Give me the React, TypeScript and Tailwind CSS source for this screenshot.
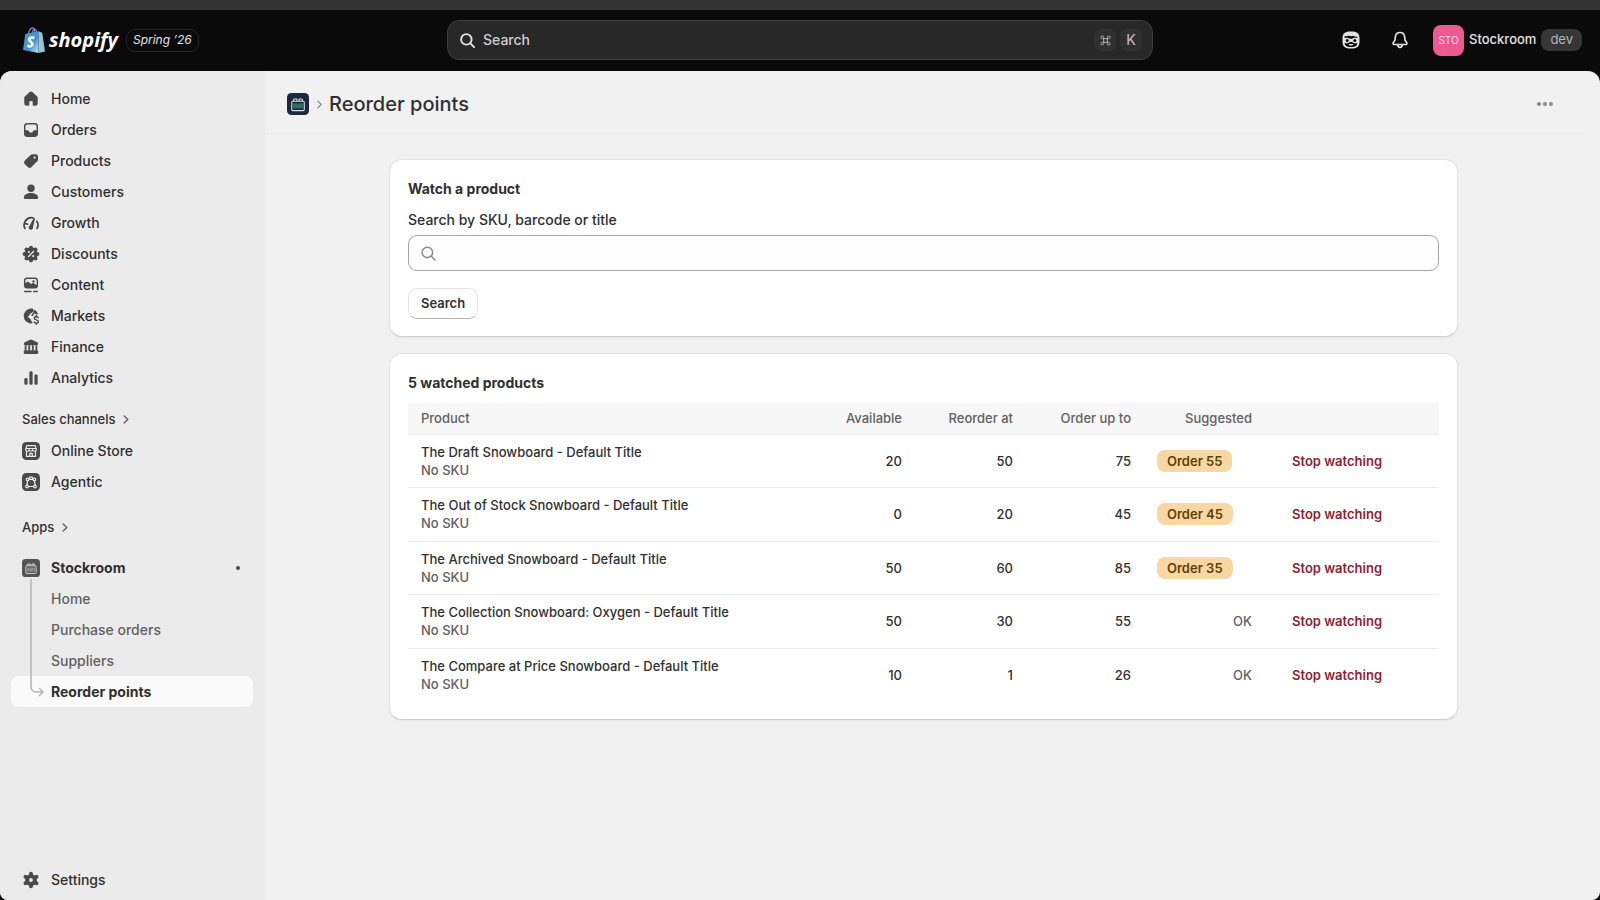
import type { ReactNode } from 'react'

type NavItem = { label: string; icon: ReactNode }

type Product = {
  title: string
  available: number
  reorderAt: number
  orderUpTo: number
  suggested: number
}

const products: Product[] = [
  { title: 'The Draft Snowboard - Default Title', available: 20, reorderAt: 50, orderUpTo: 75, suggested: 55 },
  { title: 'The Out of Stock Snowboard - Default Title', available: 0, reorderAt: 20, orderUpTo: 45, suggested: 45 },
  { title: 'The Archived Snowboard - Default Title', available: 50, reorderAt: 60, orderUpTo: 85, suggested: 35 },
  { title: 'The Collection Snowboard: Oxygen - Default Title', available: 50, reorderAt: 30, orderUpTo: 55, suggested: 0 },
  { title: 'The Compare at Price Snowboard - Default Title', available: 10, reorderAt: 1, orderUpTo: 26, suggested: 0 },
]

function Icon({ children }: { children: ReactNode }) {
  return (
    <svg viewBox="0 0 20 20" className="size-[18px] shrink-0 fill-[#4a4a4a]" aria-hidden="true">
      {children}
    </svg>
  )
}

const HomeIcon = (
  <Icon>
    <path d="M8.200 2.600a2.700 2.700 0 0 1 3.600 0l4.800 4.300c.6.500.9 1.300.9 2v5.600a3 3 0 0 1-3 3h-1.700a.9.9 0 0 1-.9-.9v-3a1.400 1.400 0 0 0-1.400-1.400h-1a1.400 1.400 0 0 0-1.400 1.400v3a.9.9 0 0 1-.9.9H5.500a3 3 0 0 1-3-3V8.900c0-.8.3-1.500.9-2z" />
  </Icon>
)

const OrdersIcon = (
  <Icon>
    <path
      fillRule="evenodd"
      d="M6 2.200h8a3.800 3.800 0 0 1 3.800 3.800v8a3.800 3.800 0 0 1-3.800 3.800H6A3.800 3.800 0 0 1 2.200 14V6A3.800 3.800 0 0 1 6 2.200zm0 1.600A2.200 2.200 0 0 0 3.800 6v4.400h2.500c.6 0 1.100.3 1.300.8l.3.700c.2.500.7.800 1.200.8h1.800c.5 0 1-.3 1.200-.8l.3-.7c.2-.5.7-.8 1.300-.8h2.500V6A2.200 2.200 0 0 0 14 3.800z"
    />
  </Icon>
)

const ProductsIcon = (
  <Icon>
    <path
      fillRule="evenodd"
      d="M9.600 3.300a3 3 0 0 1 2.100-.9h3.500a2.600 2.600 0 0 1 2.600 2.600v3.300a3 3 0 0 1-.9 2.100l-6.300 6.400a3 3 0 0 1-4.200 0l-3.200-3.200a3 3 0 0 1 0-4.200zM14 7.400a1.200 1.200 0 1 0 0-2.400 1.200 1.200 0 0 0 0 2.400z"
    />
  </Icon>
)

const CustomersIcon = (
  <Icon>
    <circle cx="10" cy="5.8" r="4.1" />
    <path d="M2 16.200c.3-3.100 3.700-5 8-5s7.700 1.900 8 5c.1 1-.6 1.700-1.600 1.700H3.600c-1 0-1.700-.7-1.600-1.700z" />
  </Icon>
)

const GrowthIcon = (
  <Icon>
    <path
      d="M3.200 16a8.200 8.200 0 0 1 9-11.700M16.600 8.200a8.200 8.200 0 0 1 .2 7.800M6 11.300l-2.300-.7"
      className="fill-none stroke-[#4a4a4a] stroke-2"
      strokeLinecap="round"
    />
    <path d="M13.800 4.400c.5.100.8.600.6 1.100l-2.100 8.800a2.500 2.500 0 1 1-3.700-1.500l4.200-8c.2-.4.600-.5 1-.4z" />
  </Icon>
)

const lobes = [
  [10, 2.8],
  [15.1, 4.9],
  [17.2, 10],
  [15.1, 15.1],
  [10, 17.2],
  [4.9, 15.1],
  [2.8, 10],
  [4.9, 4.9],
]

const DiscountsIcon = (
  <Icon>
    <circle cx="10" cy="10" r="7.4" />
    {lobes.map(([x, y]) => (
      <circle key={`${x}-${y}`} cx={x} cy={y} r="2.1" />
    ))}
    <path d="M7.300 12.700l5.400-5.400" className="stroke-[#ebebeb] stroke-[1.5]" strokeLinecap="round" />
    <circle cx="7.6" cy="7.8" r="1.2" className="fill-[#ebebeb]" />
    <circle cx="12.4" cy="12.2" r="1.2" className="fill-[#ebebeb]" />
  </Icon>
)

const ContentIcon = (
  <Icon>
    <path
      fillRule="evenodd"
      d="M5.500 1.800h9a3.300 3.300 0 0 1 3.300 3.300v5.400a3.300 3.300 0 0 1-3.300 3.300h-9a3.300 3.300 0 0 1-3.300-3.300V5.100a3.300 3.300 0 0 1 3.300-3.300zm0 1.500c-1 0-1.800.8-1.800 1.800v3l1.700-1.400a1.600 1.600 0 0 1 2.100 0l1.800 1.700c.4.400 1 .4 1.400.1l.6-.4c.5-.4 1.200-.4 1.700 0l3.300 2V5.100c0-1-.8-1.800-1.800-1.800z"
    />
    <circle cx="12.8" cy="5.9" r="1.3" />
    <path d="M3 17.300h7M13 17.300h4" className="stroke-[#4a4a4a] stroke-[1.6]" strokeLinecap="round" />
  </Icon>
)

const MarketsIcon = (
  <Icon>
    <path d="M10 1.800a8.200 8.200 0 1 0 1.400 16.300c.4-.1.500-.5.300-.9-.6-1.100-1.900-1.500-1.900-3.200 0-1.400-1.600-1.100-2.500-2.100-.8-.9-.3-2 .6-2.500 1.100-.7.900-2 2.200-2.600 1.100-.5 2.300-1 2.600-2.600.1-.7.1-1.600-.2-2.100-.6-.2-1.500-.3-2.500-.3z" />
    <path d="M14.200 3.300c1.600.9 2.800 2.400 3.400 4.100.2.500-.2.900-.7.800l-2.600-.6c-.9-.2-1.500.4-1.500 1.200 0 .9-.6 1.400-1.300 1.300-1-.1-1.400-1.300-.8-2.100.5-.6 1.300-.6 1.700-1.300.4-.8.200-2.100.6-3 .2-.4.700-.6 1.200-.4z" />
    <path
      d="M18 11.800c-.4-.7-1.200-1-2.100-1-1.300 0-2.200.7-2.200 1.700 0 2.400 4.500 1.100 4.500 3.600 0 1.100-1 1.800-2.300 1.800-1.100 0-1.900-.4-2.400-1.200M15.900 9.500v1.300M15.900 17.900v1.300"
      className="fill-none stroke-[#4a4a4a] stroke-[1.6]"
      strokeLinecap="round"
    />
  </Icon>
)

const FinanceIcon = (
  <Icon>
    <path d="M9 1.900a2.200 2.200 0 0 1 2 0l5.900 2.900c.6.300.9.800.9 1.400v.6c0 .7-.5 1.200-1.200 1.200H3.400c-.7 0-1.200-.5-1.200-1.200v-.6c0-.6.300-1.100.9-1.400z" />
    <path d="M4 8v6M8 8v6M12 8v6M16 8v6" className="stroke-[#4a4a4a] stroke-2" />
    <rect x="2" y="13.5" width="16" height="4.3" rx="1.5" />
  </Icon>
)

const AnalyticsIcon = (
  <Icon>
    <rect x="2.6" y="10" width="3.6" height="7.5" rx="1.5" />
    <rect x="8.2" y="2.5" width="3.6" height="15" rx="1.5" />
    <rect x="13.8" y="6" width="3.6" height="11.5" rx="1.5" />
  </Icon>
)

const SettingsIcon = (
  <Icon>
    <circle cx="10" cy="10" r="6.5" />
    <path
      d="M10 3v14M3.900 6.500l12.200 7M16.100 6.500l-12.200 7"
      className="stroke-[#4a4a4a] stroke-[4.4]"
      strokeLinecap="round"
    />
    <circle cx="10" cy="10" r="2.1" className="fill-[#ebebeb]" />
  </Icon>
)

const OnlineStoreIcon = (
  <Icon>
    <rect width="20" height="20" rx="5" />
    <g className="fill-none stroke-[#ebebeb] stroke-[1.3]" strokeLinejoin="round">
      <path d="M5.300 4h9.400l1.300 4.300a1.900 1.900 0 0 1-4 0 1.900 1.900 0 0 1-4 0 1.900 1.900 0 0 1-4 0zM4.300 7.200h11.400M5 10.400V16h10v-5.600M8.600 16v-3.300h2.800V16" />
    </g>
  </Icon>
)

const AgenticIcon = (
  <Icon>
    <rect width="20" height="20" rx="5" />
    <g className="fill-none stroke-[#ebebeb] stroke-[1.3]">
      <path d="M7.600 7h4.800M13.800 8.800l.8 4.900M12.800 15H7.200M6.200 8.800l-.8 4.900M8.200 6.600l.4-2h2.800l.4 2" />
      <circle cx="6.2" cy="7.2" r="1.5" />
      <circle cx="13.8" cy="7.2" r="1.5" />
      <circle cx="5.6" cy="15" r="1.5" />
      <circle cx="14.4" cy="15" r="1.5" />
    </g>
  </Icon>
)

function CrateShape() {
  return (
    <g className="fill-none stroke-[#dcdcdc]" strokeLinejoin="round">
      <path d="M5.800 7.500L6.300 5.500h2.700v2M11 7.500v-2h2.700l.5 2" />
      <rect x="4.3" y="7.5" width="11.4" height="8.5" rx="1" />
    </g>
  )
}

const StockroomIcon = (
  <Icon>
    <rect width="20" height="20" rx="4" className="fill-[#555]" />
    <rect x="5.5" y="9.5" width="9" height="4.5" className="fill-[#8a8a8a]" />
    <CrateShape />
  </Icon>
)

const mainNav: NavItem[] = [
  { label: 'Home', icon: HomeIcon },
  { label: 'Orders', icon: OrdersIcon },
  { label: 'Products', icon: ProductsIcon },
  { label: 'Customers', icon: CustomersIcon },
  { label: 'Growth', icon: GrowthIcon },
  { label: 'Discounts', icon: DiscountsIcon },
  { label: 'Content', icon: ContentIcon },
  { label: 'Markets', icon: MarketsIcon },
  { label: 'Finance', icon: FinanceIcon },
  { label: 'Analytics', icon: AnalyticsIcon },
]

const channels: NavItem[] = [
  { label: 'Online Store', icon: OnlineStoreIcon },
  { label: 'Agentic', icon: AgenticIcon },
]

const appPages = ['Home', 'Purchase orders', 'Suppliers', 'Reorder points']

function NavLink({ label, icon }: NavItem) {
  return (
    <a href="#" className="flex h-[31px] items-center gap-[11px] rounded-lg px-[11px] text-sm font-[550] text-[#303030]">
      {icon}
      {label}
    </a>
  )
}

function SectionButton({ label }: { label: string }) {
  return (
    <button type="button" className="flex h-[31px] items-center gap-2 px-[11px] text-[13px] font-[550] text-[#303030]">
      {label}
      <svg viewBox="0 0 6 10" className="h-[9px] w-[6px] fill-none stroke-[#616161] stroke-[1.5]" aria-hidden="true">
        <path d="M1 1l4 4-4 4" strokeLinecap="round" strokeLinejoin="round" />
      </svg>
    </button>
  )
}

function SearchGlyph({ className }: { className: string }) {
  return (
    <svg viewBox="0 0 16 16" className={className} aria-hidden="true">
      <circle cx="6.8" cy="6.8" r="5.6" />
      <path d="M11 11l4 4" strokeLinecap="round" />
    </svg>
  )
}

function TopBar() {
  return (
    <header className="grid h-[61px] grid-cols-[1fr_minmax(0,706px)_1fr] items-center pb-px">
      <div className="flex items-center gap-2 pl-[23px]">
        <a href="#" className="flex items-center gap-1 text-white">
          <svg viewBox="0 0 22 26" className="h-[26px] w-[22px]" aria-hidden="true">
            <defs>
              <linearGradient id="bag" x1="0" y1="0" x2="1" y2="1">
                <stop offset="0" stopColor="#7f8fe0" />
                <stop offset=".3" stopColor="#3f9cc4" />
                <stop offset=".6" stopColor="#4d8ed6" />
                <stop offset="1" stopColor="#c3f0dc" />
              </linearGradient>
            </defs>
            <path
              d="M5.500 7c.3-3.500 2.200-6 4-6 1.500 0 2.300 1.800 2.300 5M9 6.500C9.500 3.600 11 2 12.300 2.300c1 .3 1.500 1.500 1.600 3"
              fill="none"
              stroke="#7b86cf"
              strokeWidth="1.3"
            />
            <path d="M2.300 7L15.500 4.300V26L0 23z" fill="url(#bag)" />
            <path d="M15.500 4.300l3.700 1.400L22 24.600 15.500 26z" fill="#8fc4dc" />
            <path
              d="M11.300 11c-1.200-.6-4.900-1-5 1.700-.1 2.200 3.300 2.200 3.200 4.500-.2 2.400-3.200 2.700-5.200 1.200"
              fill="none"
              stroke="#fff"
              strokeWidth="2.6"
            />
          </svg>
          <span className="font-['Open_Sans',sans-serif] text-xl leading-6 font-bold italic">shopify</span>
        </a>
        <span className="flex h-[23px] items-center rounded-[9px] border border-[#262626] px-[6px] text-xs text-[#e3e3e3] italic">
          Spring ’26
        </span>
      </div>

      <label className="flex h-10 items-center gap-2 rounded-xl border border-[#3d3d3d] bg-[#282828] px-[10px]">
        <SearchGlyph className="ml-[2px] size-[15px] fill-none stroke-[#e3e3e3] stroke-2" />
        <input
          type="search"
          aria-label="Search"
          placeholder="Search"
          className="min-w-0 flex-1 bg-transparent text-sm text-[#e3e3e3] outline-none placeholder:text-[#cfcfcf]"
        />
        <span className="flex gap-1 text-sm text-[#b5b5b5]">
          <kbd className="flex size-[22px] items-center justify-center rounded-md bg-[#303030] font-['Inter',sans-serif]">
            <svg viewBox="0 0 12 12" className="size-[11px] fill-none stroke-[#b5b5b5]" aria-hidden="true">
              <path d="M4 4V2.500A1.500 1.500 0 1 0 2.500 4h7A1.500 1.500 0 1 0 8 2.500v7A1.500 1.500 0 1 0 9.500 8h-7A1.500 1.500 0 1 0 4 9.500z" />
            </svg>
          </kbd>
          <kbd className="flex size-[22px] items-center justify-center rounded-md bg-[#303030] font-['Inter',sans-serif]">K</kbd>
        </span>
      </label>

      <div className="flex items-center justify-end gap-[17px] pr-[18px]">
        <button type="button" aria-label="Sidekick" className="flex size-8 items-center justify-center">
          <svg viewBox="0 0 18 18" className="size-[18px]" aria-hidden="true">
            <rect x=".5" y=".5" width="17" height="17" rx="6" className="fill-[#e3e3e3]" />
            <path d="M2.600 6.900V5.200c1.600.3 2.900 0 3.700-.8.400.8 1.200.9 2 .3.900.7 2 .7 2.700.1 1.200.9 2.600 1.100 4.400 1v1.100c-2.200-.4-4.200-.1-5.300.9H8C6.800 6.700 4.800 6.400 2.600 6.900z" className="fill-[#0a0a0a]" />
            <circle cx="5.2" cy="9.4" r="1.5" className="fill-[#0a0a0a]" />
            <circle cx="12.8" cy="9.4" r="1.5" className="fill-[#0a0a0a]" />
            <path d="M2.600 11.900c1.800.7 4 .5 5.300-.9h2.200c1.300 1.400 3.500 1.600 5.300.9-.3 2.600-1.700 4-6.400 4s-6.100-1.400-6.400-4z" className="fill-[#0a0a0a]" />
            <path d="M6.600 13h4.800c-.4 1.100-1.200 1.500-2.400 1.500S7 14.100 6.600 13z" className="fill-[#e3e3e3]" />
          </svg>
        </button>
        <button type="button" aria-label="Notifications" className="flex size-8 items-center justify-center">
          <svg viewBox="0 0 18 18" className="size-[18px] fill-none stroke-[#e3e3e3] stroke-[1.6]" aria-hidden="true">
            <path
              d="M9 1.500c-2.700 0-4.500 2-4.700 4.600l-.2 2.400c0 .5-.2.900-.5 1.300l-1.400 2c-.5.800 0 1.700.9 1.700h11.800c.9 0 1.400-.9.9-1.700l-1.400-2c-.3-.4-.5-.8-.5-1.300l-.2-2.400C13.500 3.500 11.700 1.500 9 1.500z"
              strokeLinejoin="round"
            />
            <path d="M6.600 13.700c.2 1.700 1 2.700 2.400 2.700s2.200-1 2.400-2.700" />
          </svg>
        </button>
        <button type="button" className="flex items-center gap-[5px] text-[13px] font-[550] text-[#e3e3e3]">
          <span className="flex size-[31px] items-center justify-center rounded-lg bg-[#ec5a91] text-[10px] font-normal text-[#fbdce8]">
            STO
          </span>
          Stockroom
          <span className="flex h-[22px] items-center rounded-lg bg-[#363636] px-[9px] text-[13px] font-normal text-[#b5b5b5]">
            dev
          </span>
        </button>
      </div>
    </header>
  )
}

function Sidebar() {
  return (
    <aside className="flex w-[265px] shrink-0 flex-col justify-between bg-[#ebebeb] pt-3 pr-3 pb-[5px] pl-[11px]">
      <nav>
        {mainNav.map((item) => (
          <NavLink key={item.label} {...item} />
        ))}

        <div className="mt-[11px]">
          <SectionButton label="Sales channels" />
          {channels.map((item) => (
            <NavLink key={item.label} {...item} />
          ))}
        </div>

        <div className="mt-[15px]">
          <SectionButton label="Apps" />
        </div>

        <div className="mt-[9px]">
          <a href="#" className="flex h-[31px] items-center gap-[11px] px-[11px] text-sm font-[650] text-[#303030]">
            {StockroomIcon}
            <span className="flex-1">Stockroom</span>
            <span className="mr-[2px] size-1 rounded-full bg-[#4a4a4a]" />
          </a>
          <ul className="relative text-sm text-[#616161]">
            {appPages.map((page) => (
              <li key={page}>
                <a
                  href="#"
                  className={
                    page === 'Reorder points'
                      ? 'flex h-[31px] items-center rounded-lg bg-[#fafafa] pl-10 font-[650] text-[#303030]'
                      : 'flex h-[31px] items-center rounded-lg pl-10'
                  }
                >
                  {page}
                </a>
              </li>
            ))}
            <svg
              viewBox="0 0 16 118"
              className="absolute -top-1 left-[18px] h-[118px] w-4 fill-none stroke-[#b5b5b5] stroke-[1.5]"
              aria-hidden="true"
            >
              <path d="M2 0v108a5 5 0 0 0 5 5h7M10.500 109.500l3.500 3.500-3.500 3.500" strokeLinecap="round" strokeLinejoin="round" />
            </svg>
          </ul>
        </div>
      </nav>

      <NavLink label="Settings" icon={SettingsIcon} />
    </aside>
  )
}

function WatchCard() {
  return (
    <section className="rounded-[13px] border border-[#e3e3e3] border-b-[#cfcfcf] bg-white p-[18px] pb-[17px] shadow-xs">
      <h2 className="text-sm leading-[22px] font-[650]">Watch a product</h2>
      <label htmlFor="product-search" className="mt-[9px] block text-sm leading-[22px]">
        Search by SKU, barcode or title
      </label>
      <div className="mt-1 flex h-9 items-center gap-2 rounded-[9px] border border-[#a5a5a5] bg-[#fdfdfd] px-3">
        <SearchGlyph className="size-[15px] fill-none stroke-[#8a8a8a] stroke-[1.6]" />
        <input id="product-search" type="text" className="min-w-0 flex-1 bg-transparent text-sm outline-none" />
      </div>
      <button
        type="button"
        className="mt-[17px] flex h-[31px] items-center rounded-[9px] border border-[#e3e3e3] border-b-[#b5b5b5] bg-white px-3 text-[13px] font-[600]"
      >
        Search
      </button>
    </section>
  )
}

function ProductsCard() {
  return (
    <section className="mt-4 rounded-[13px] border border-[#e3e3e3] border-b-[#cfcfcf] bg-white p-[18px] shadow-xs">
      <h2 className="text-sm leading-[22px] font-[650]">5 watched products</h2>
      <table className="mt-[9px] w-full table-fixed text-[13px] leading-[18px]">
        <colgroup>
          <col />
          <col className="w-[83px]" />
          <col className="w-[111px]" />
          <col className="w-[118px]" />
          <col className="w-[121px]" />
          <col className="w-[174px]" />
        </colgroup>
        <thead>
          <tr className="h-[31px] border-b border-[#ebebeb] bg-[#f7f7f7] text-right text-[#616161]">
            <th scope="col" className="px-[13px] text-left font-[550]">Product</th>
            <th scope="col" className="px-[13px] font-[550]">Available</th>
            <th scope="col" className="px-[13px] font-[550]">Reorder at</th>
            <th scope="col" className="px-[13px] font-[550]">Order up to</th>
            <th scope="col" className="px-[13px] font-[550]">Suggested</th>
            <td />
          </tr>
        </thead>
        <tbody>
          {products.map((p) => (
            <tr key={p.title} className="h-[53px] border-b border-[#ebebeb] text-right last:border-0 even:h-[54px]">
              <td className="px-[13px] text-left">
                <div>{p.title}</div>
                <div className="text-[#616161]">No SKU</div>
              </td>
              <td className="px-[13px]">{p.available}</td>
              <td className="px-[13px]">{p.reorderAt}</td>
              <td className="px-[13px]">{p.orderUpTo}</td>
              <td className="px-[13px]">
                {p.suggested > 0 ? (
                  <span className="flex h-[22px] w-fit items-center rounded-lg bg-[#f9d7a5] px-[10px] font-[600] text-[#5e4200]">
                    Order {p.suggested}
                  </span>
                ) : (
                  <span className="text-[#616161]">OK</span>
                )}
              </td>
              <td className="px-[13px] text-left">
                <button type="button" className="px-[14px] font-[600] text-[#8e1f2f]">
                  Stop watching
                </button>
              </td>
            </tr>
          ))}
        </tbody>
      </table>
    </section>
  )
}

export default function App() {
  return (
    <div className="flex min-h-screen flex-col bg-[#0a0a0a] font-['Inter',sans-serif] font-[450] text-[#303030]">
      <div className="h-[10px] bg-[#353535]" />
      <TopBar />
      <div className="flex flex-1 overflow-hidden rounded-t-xl rounded-b-lg bg-[#f1f1f1]">
        <Sidebar />
        <main className="min-w-0 flex-1 pr-[18px]">
          <div className="flex h-[63px] items-center border-b border-[#ebebeb] pt-1 pr-[29px] pl-[22px]">
            <svg viewBox="0 0 20 20" className="size-[22px]" aria-hidden="true">
              <rect width="20" height="20" rx="4" className="fill-[#1c2740]" />
              <rect x="5.5" y="9.5" width="9" height="4.5" className="fill-[#2f6f63]" />
              <CrateShape />
            </svg>
            <svg viewBox="0 0 6 10" className="ml-2 h-[9px] w-[5px] fill-none stroke-[#8a8a8a] stroke-[1.5]" aria-hidden="true">
              <path d="M1 1l4 4-4 4" strokeLinecap="round" strokeLinejoin="round" />
            </svg>
            <h1 className="ml-[7px] flex-1 text-xl font-[550]">Reorder points</h1>
            <button type="button" aria-label="More actions" className="flex h-7 items-center gap-[2px]">
              <span className="size-1 rounded-full bg-[#8a8a8a]" />
              <span className="size-1 rounded-full bg-[#8a8a8a]" />
              <span className="size-1 rounded-full bg-[#8a8a8a]" />
            </button>
          </div>
          <div className="mx-auto max-w-[1069px] py-[25px]">
            <WatchCard />
            <ProductsCard />
          </div>
        </main>
      </div>
    </div>
  )
}
